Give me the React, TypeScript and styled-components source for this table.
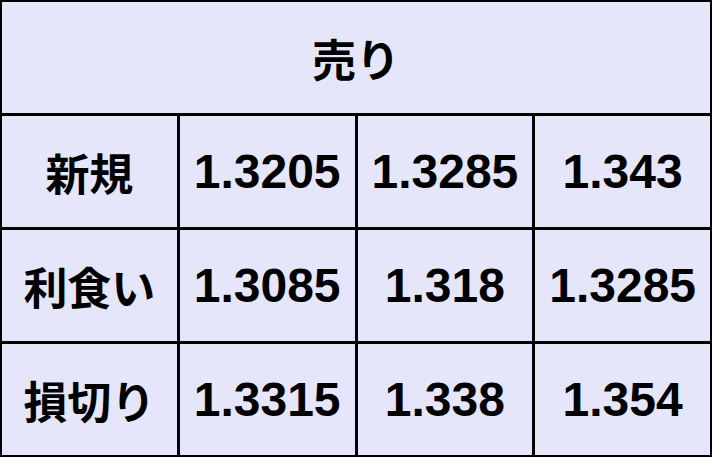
import React from "react";
import styled, { createGlobalStyle } from "styled-components";

const GlobalStyle = createGlobalStyle`
  html, body {
    margin: 0;
    padding: 0;
    background: #ffffff;
  }
  * { box-sizing: border-box; }
`;

const Table = styled.div`
  display: grid;
  grid-template-columns: repeat(4, 1fr);
  grid-template-rows: repeat(4, 111px);
  gap: 3px;
  padding: 2px;
  width: 712px;
  height: 457px;
  background: #000000;
  font-family: "Liberation Sans", "Noto Sans CJK JP", Arial, sans-serif;
  font-weight: bold;
  color: #000000;
`;

const Cell = styled.div<{ $span?: number }>`
  grid-column: span ${(p) => p.$span ?? 1};
  display: flex;
  align-items: center;
  justify-content: center;
  background: #e6e6fa;
  font-size: 48px;
  line-height: 1;
  white-space: nowrap;
`;

const Label = styled.span`
  font-family: "Noto Sans CJK JP", "Liberation Sans", sans-serif;
  font-weight: bold;
  font-size: 44px;
`;

const rows: { label: string; values: string[] }[] = [
  { label: "新規", values: ["1.3205", "1.3285", "1.343"] },
  { label: "利食い", values: ["1.3085", "1.318", "1.3285"] },
  { label: "損切り", values: ["1.3315", "1.338", "1.354"] },
];

export default function App() {
  return (
    <>
      <GlobalStyle />
      <Table>
        <Cell $span={4}>
          <Label>売り</Label>
        </Cell>
        {rows.map((r) => (
          <React.Fragment key={r.label}>
            <Cell>
              <Label>{r.label}</Label>
            </Cell>
            {r.values.map((v, i) => (
              <Cell key={i}>{v}</Cell>
            ))}
          </React.Fragment>
        ))}
      </Table>
    </>
  );
}
